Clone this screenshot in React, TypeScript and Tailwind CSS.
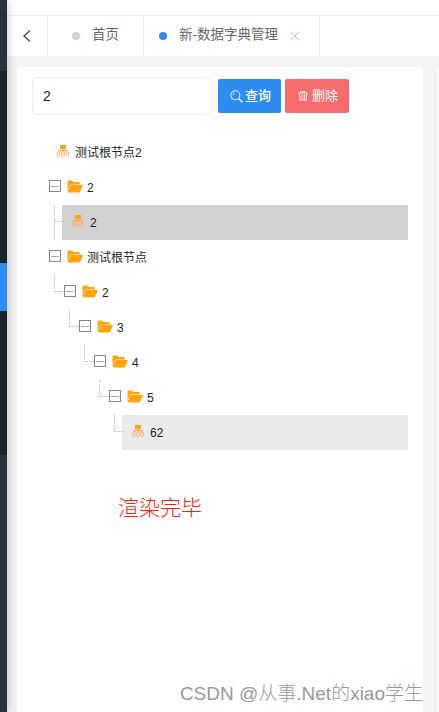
import clsx from "clsx";
import type { ReactNode } from "react";

type TreeNode = {
  label: string;
  level: number;
  leaf?: boolean;
  line?: "half" | "full";
  className?: string;
};

const nodes: TreeNode[] = [
  { label: "测试根节点2", level: 0, leaf: true },
  { label: "2", level: 0 },
  { label: "2", level: 1, leaf: true, line: "full", className: "bg-[#d1d1d1]" },
  { label: "测试根节点", level: 0 },
  { label: "2", level: 1, line: "half" },
  { label: "3", level: 2, line: "half" },
  { label: "4", level: 3, line: "half" },
  { label: "5", level: 4, line: "half" },
  { label: "62", level: 5, leaf: true, line: "half", className: "bg-[#e9ebea]" },
];

const FolderIcon = () => (
  <svg width="16" height="13" viewBox="0 0 16 13" className="ml-1.5 shrink-0">
    <path
      d="M.5 11V1.4Q.5.4 1.5.4H5l1.6 1.5h5.1q1.1 0 1.1 1v2L12 11.6Z"
      fill="#ffa30f"
    />
    <path
      d="M1 11.7 3.4 5.8q.4-.9 1.3-.9H15.2q1 0 .6.9l-2.7 6q-.4.8-1.3.8H1.6Q.8 12.6 1 11.7Z"
      fill="#ffa30f"
    />
    <path d="M1.2 10.2 3 5.4q.4-.9 1.3-.9h8.5" fill="none" stroke="#ffe3c8" strokeWidth=".8" />
  </svg>
);

const LeafIcon = () => (
  <svg width="12" height="12" viewBox="0 0 12 12" className="shrink-0">
    <path d="M3 0h6v4H3z" fill="#ffa30f" />
    <path d="M5.5 4h1v2h-1zM1 5.2h10v1.1H1z" fill="#ffa30f" />
    <g fill="none" stroke="#fcae78">
      <rect x=".5" y="6.9" width="2.4" height="4.6" rx=".9" />
      <rect x="4.8" y="6.9" width="2.4" height="4.6" rx=".9" />
      <rect x="9.1" y="6.9" width="2.4" height="4.6" rx=".9" />
    </g>
  </svg>
);

const SearchIcon = () => (
  <svg width="13" height="13" viewBox="0 0 13 13" fill="none" stroke="#d9eaff">
    <circle cx="5.3" cy="5.2" r="4.5" strokeWidth="1.1" />
    <path d="M3 5.3a2.4 2.4 0 0 1 2-2.5" strokeWidth=".7" />
    <path d="m8.8 8.8 3.1 2.9" strokeWidth="1.7" strokeLinecap="round" />
  </svg>
);

const TrashIcon = () => (
  <svg width="10" height="10" viewBox="0 0 10 10" fill="none" stroke="#ffe0dc">
    <path d="M0 2h10M3 1.5V.6h4v.9" strokeWidth="1.2" />
    <path d="m1.4 2.6.4 6.3h6.4l.4-6.3M3.8 3.2v5M6.2 3.2v5" strokeWidth="1.2" />
  </svg>
);

const TreeRow = ({ node }: { node: TreeNode }) => (
  <div
    className={clsx("relative flex h-[35px] items-center", node.className)}
    style={{ marginLeft: node.level * 15 }}
  >
    {node.line && (
      <>
        <span
          className={clsx(
            "absolute -left-2 top-0 w-px border-l border-dotted border-[#b5b8c0]",
            node.line === "full" ? "h-[35px]" : "h-[17px]"
          )}
        />
        <span className="absolute -left-2 top-4 w-2.5 border-t border-dotted border-[#b5b8c0]" />
      </>
    )}
    {node.leaf ? (
      <span className="-mt-[3px] ml-2.5 mr-1.5 flex">
        <LeafIcon />
      </span>
    ) : (
      <span className="-mt-[3px] ml-0.5 mr-1 flex items-center">
        <span className="relative flex size-3 items-center justify-center border border-[#858391] bg-white">
          <span className="h-px w-2 bg-[#aaa7ae]" />
        </span>
        <FolderIcon />
      </span>
    )}
    <span className="whitespace-nowrap text-[12px] leading-4 text-[#222]">{node.label}</span>
  </div>
);

const Tab = ({ color, children }: { color: string; children: ReactNode }) => (
  <div className="flex h-10 items-center border-r border-[#f0f0f0] text-[13.5px] text-[#666]">
    <span className={clsx("mr-3 size-2 rounded-full", color)} />
    {children}
  </div>
);

const Sidebar = () => (
  <aside className="z-10 flex w-[7px] shrink-0 flex-col bg-[#28333e] shadow-[1px_0_9px_rgba(30,40,55,0.28)]">
    <div className="h-[15px] border-b border-[#1d2731]" />
    <div className="h-14" />
    <div className="h-48 bg-[#1c242b]" />
    <div className="h-12 bg-[#2d8cf0]" />
    <div className="h-36 bg-[#1c242b]" />
  </aside>
);

export default function App() {
  return (
    <div className="flex h-[712px] w-[439px] overflow-hidden bg-[#f4f4f4] font-['Liberation_Sans','Noto_Sans_CJK_SC',sans-serif]">
      <Sidebar />
      <div className="flex min-w-0 flex-1 flex-col">
        <header className="h-4 shrink-0 border-b border-[#f0f0f0] bg-white" />
        <nav className="flex h-10 shrink-0 bg-white">
          <div className="flex w-[41px] items-center justify-center border-r border-[#f0f0f0]">
            <svg width="8" height="12" viewBox="0 0 8 12" fill="none" stroke="#444" strokeWidth="1.3">
              <path d="M7 .5 1 6l6 5.5" />
            </svg>
          </div>
          <div className="w-6" />
          <div className="w-[72px] *:w-full">
            <Tab color="bg-[#d3d3d3]">
              <span className="-mt-px">首页</span>
            </Tab>
          </div>
          <div className="ml-[15px] w-[161px] *:w-full">
            <Tab color="bg-[#2d8cf0]">
              <span className="-mt-px whitespace-nowrap">新-数据字典管理</span>
              <svg width="10" height="10" viewBox="0 0 10 10" className="ml-3 shrink-0" stroke="#bdc4d2">
                <path d="m.5.5 9 9m0-9-9 9" />
              </svg>
            </Tab>
          </div>
        </nav>
        <div className="flex flex-1 gap-[15px] pl-2.5 pt-[11px]">
          <main className="flex w-[406px] shrink-0 flex-col rounded-t-sm bg-white px-[15px] pt-2.5">
            <div className="flex items-start">
              <input
                className="h-[38px] w-[182px] rounded border border-[#ececec] px-2.5 text-[14px] text-[#222] outline-none"
                defaultValue="2"
              />
              <button className="ml-1 mt-0.5 flex h-[34px] w-[63px] items-center rounded-xs bg-[#2d8cf0] pl-3 text-[13px] text-white">
                <SearchIcon />
                <span className="ml-0.5 whitespace-nowrap font-medium">查询</span>
              </button>
              <button className="ml-1 mt-0.5 flex h-[34px] w-16 items-center rounded-xs bg-[#f56c6c] pl-[13px] text-[13px] text-white">
                <TrashIcon />
                <span className="ml-1 whitespace-nowrap">删除</span>
              </button>
            </div>
            <div className="ml-[15px] mt-5">
              {nodes.map((node, i) => (
                <TreeRow key={i} node={node} />
              ))}
            </div>
            <p className="ml-[86px] mt-[42px] text-[21px] font-light leading-8 text-[#ff1a0a]">渲染完毕</p>
            <p className="-mr-[15px] mb-1 ml-auto mt-auto whitespace-nowrap text-[19px] font-light leading-7 text-[#999]">
              CSDN @从事.Net的xiao学生
            </p>
          </main>
          <div className="w-4 shrink-0 rounded-tl-sm bg-white" />
        </div>
      </div>
    </div>
  );
}
